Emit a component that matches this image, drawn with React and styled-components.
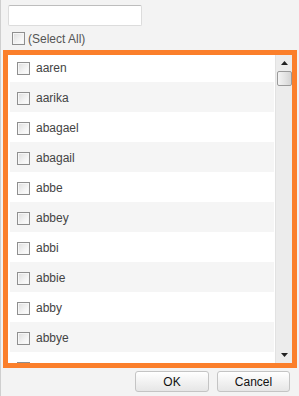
import React from "react";
import styled, { createGlobalStyle } from "styled-components";

const GlobalStyle = createGlobalStyle`
  html, body {
    margin: 0;
    padding: 0;
    background: #f3f3f3;
  }
  body {
    font-family: "Liberation Sans", Arial, sans-serif;
    font-size: 12px;
  }
`;

const Panel = styled.div`
  width: 299px;
  height: 396px;
  box-sizing: border-box;
  border-left: 1px solid #cfcfcf;
  padding: 5px 0 0 2px;
  display: flex;
  flex-direction: column;
  overflow: hidden;
`;

const Search = styled.input`
  width: 134px;
  height: 21px;
  box-sizing: border-box;
  margin-left: 5px;
  border: 1px solid #dcdcdc;
  border-top-color: #bdbdbd;
  border-radius: 2px;
  background: #fff;
  outline: none;
`;

const SelectAllRow = styled.label`
  display: flex;
  align-items: center;
  gap: 3px;
  height: 13px;
  margin: 6px 0 0 9px;
  color: #555;
  font-size: 12px;
`;

const Box = styled.span`
  width: 13px;
  height: 13px;
  box-sizing: border-box;
  flex: none;
  border: 1px solid #8f8f8f;
  background: linear-gradient(135deg, #dcdcdc 0%, #f4f4f4 60%, #ffffff 100%);
  box-shadow: inset 0 0 0 1px #f6f6f6;
`;

const ListBox = styled.div`
  margin-top: 5px;
  width: 294px;
  height: 318px;
  box-sizing: border-box;
  border: 5px solid #fb7f2b;
  background: #fff;
  display: flex;
`;

const Viewport = styled.div`
  flex: 1;
  overflow: hidden;
  padding: 0 1px 0 2px;
`;

const Rows = styled.ul`
  list-style: none;
  margin: -3px 0 0;
  padding: 0;
`;

const Row = styled.li`
  height: 30px;
  box-sizing: border-box;
  padding: 2px 0 0 7px;
  display: flex;
  align-items: center;
  gap: 6px;
  background: ${(p) => (p.$alt ? "#f5f5f5" : "#fff")};
  color: #444;
  font-size: 12px;
`;

const Scrollbar = styled.div`
  width: 17px;
  flex: none;
  background: #ececec;
  border-left: 1px solid #e2e2e2;
  box-sizing: border-box;
  display: flex;
  flex-direction: column;
  align-items: center;
`;

const Arrow = styled.div`
  height: 16px;
  width: 100%;
  display: flex;
  align-items: center;
  justify-content: center;
`;

const Track = styled.div`
  flex: 1;
  width: 100%;
  display: flex;
  flex-direction: column;
  align-items: center;
`;

const Thumb = styled.div`
  width: 15px;
  height: 15px;
  box-sizing: border-box;
  border: 1px solid #9a9a9a;
  border-radius: 2px;
  background: linear-gradient(90deg, #f4f4f4 0%, #e2e2e2 60%, #d4d4d4 100%);
`;

const Footer = styled.div`
  display: flex;
  justify-content: flex-end;
  gap: 8px;
  margin-top: 3px;
  padding-right: 9px;
`;

const Button = styled.button`
  width: ${(p) => p.$w}px;
  height: 21px;
  box-sizing: border-box;
  border: 1px solid #c4c4c4;
  border-radius: 3px;
  background: linear-gradient(180deg, #ffffff 0%, #f2f2f2 50%, #e6e6e6 100%);
  font-family: "Liberation Sans", Arial, sans-serif;
  font-size: 12px;
  color: #111;
  padding: 0;
`;

const names = [
  "aaren",
  "aarika",
  "abagael",
  "abagail",
  "abbe",
  "abbey",
  "abbi",
  "abbie",
  "abby",
  "abbye",
  "",
];

const Tri = ({ up }) => (
  <svg width="7" height="4" viewBox="0 0 7 4">
    <path d={up ? "M3.5 0 L7 4 L0 4 Z" : "M0 0 L7 0 L3.5 4 Z"} fill="#222" />
  </svg>
);

export default function App() {
  return (
    <>
      <GlobalStyle />
      <Panel>
        <Search type="text" />
        <SelectAllRow>
          <Box />
          (Select All)
        </SelectAllRow>
        <ListBox>
          <Viewport>
            <Rows>
              {names.map((n, i) => (
                <Row key={i} $alt={i % 2 === 1}>
                  <Box />
                  {n}
                </Row>
              ))}
            </Rows>
          </Viewport>
          <Scrollbar>
            <Arrow>
              <Tri up />
            </Arrow>
            <Track>
              <Thumb />
            </Track>
            <Arrow>
              <Tri />
            </Arrow>
          </Scrollbar>
        </ListBox>
        <Footer>
          <Button $w={74}>OK</Button>
          <Button $w={73}>Cancel</Button>
        </Footer>
      </Panel>
    </>
  );
}
